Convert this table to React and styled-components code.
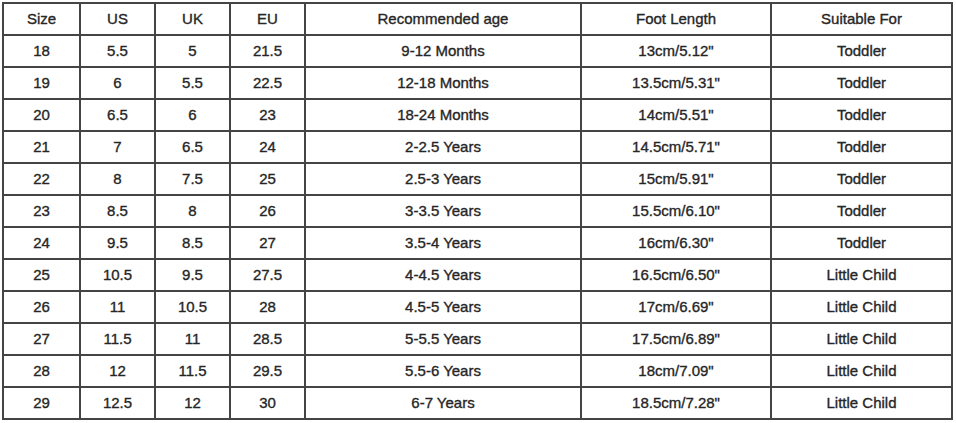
import React from 'react';
import styled, { createGlobalStyle } from 'styled-components';

const GlobalStyle = createGlobalStyle`
  html, body {
    margin: 0;
    padding: 0;
    background: #ffffff;
  }
  body {
    font-family: "Liberation Sans", Arial, sans-serif;
  }
`;

const columns = ['Size', 'US', 'UK', 'EU', 'Recommended age', 'Foot Length', 'Suitable For'];

const rows = [
  ['18', '5.5', '5', '21.5', '9-12 Months', '13cm/5.12"', 'Toddler'],
  ['19', '6', '5.5', '22.5', '12-18 Months', '13.5cm/5.31"', 'Toddler'],
  ['20', '6.5', '6', '23', '18-24 Months', '14cm/5.51"', 'Toddler'],
  ['21', '7', '6.5', '24', '2-2.5 Years', '14.5cm/5.71"', 'Toddler'],
  ['22', '8', '7.5', '25', '2.5-3 Years', '15cm/5.91"', 'Toddler'],
  ['23', '8.5', '8', '26', '3-3.5 Years', '15.5cm/6.10"', 'Toddler'],
  ['24', '9.5', '8.5', '27', '3.5-4 Years', '16cm/6.30"', 'Toddler'],
  ['25', '10.5', '9.5', '27.5', '4-4.5 Years', '16.5cm/6.50"', 'Little Child'],
  ['26', '11', '10.5', '28', '4.5-5 Years', '17cm/6.69"', 'Little Child'],
  ['27', '11.5', '11', '28.5', '5-5.5 Years', '17.5cm/6.89"', 'Little Child'],
  ['28', '12', '11.5', '29.5', '5.5-6 Years', '18cm/7.09"', 'Little Child'],
  ['29', '12.5', '12', '30', '6-7 Years', '18.5cm/7.28"', 'Little Child'],
];

export default function App() {
  return (
    <Page>
      <GlobalStyle />
      <SizeGrid role="table">
        {columns.map(col => (
          <Cell key={col} role="columnheader">{col}</Cell>
        ))}
        {rows.map(row =>
          row.map((value, i) => (
            <Cell key={row[0] + '-' + i} role="cell">{value}</Cell>
          ))
        )}
      </SizeGrid>
    </Page>
  );
}

const Page = styled.div`
  width: 956px;
  height: 423px;
  padding: 2px 0 0 2px;
  box-sizing: border-box;
  background: #fff;
`;

const SizeGrid = styled.div`
  display: grid;
  grid-template-columns: 77px 75px 75px 75px 276px 190px 181px;
  grid-auto-rows: 32px;
  width: max-content;
  border-left: 2px solid #444;
  border-top: 2px solid #444;
`;

const Cell = styled.div`
  box-sizing: border-box;
  display: flex;
  align-items: center;
  justify-content: center;
  border-right: 2px solid #444;
  border-bottom: 2px solid #444;
  font-size: 15px;
  font-weight: 400;
  color: #262626;
  -webkit-text-stroke: 0.35px #262626;
  padding-bottom: 1px;
`;
